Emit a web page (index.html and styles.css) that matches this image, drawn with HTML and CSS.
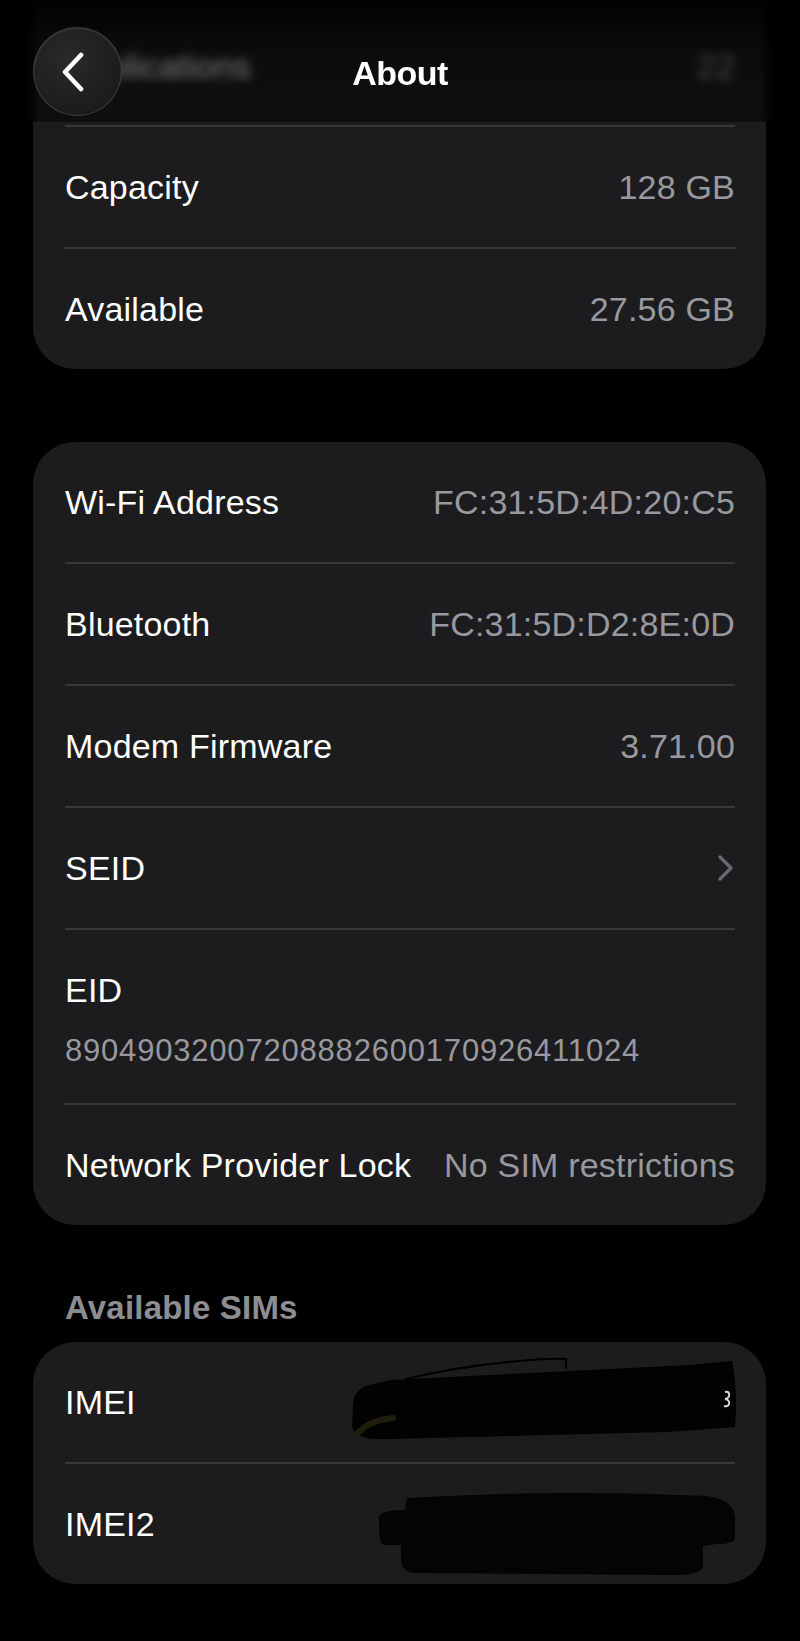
FILE: index.html
```html
<!DOCTYPE html>
<html lang="en">
<head>
    <meta charset="UTF-8" />
    <meta name="viewport" content="width=device-width, initial-scale=1.0" />
    <title>About</title>
    <link rel="stylesheet" href="styles.css">
</head>
<body>
    <div class="nav-bar">
        <button class="back-btn" aria-label="Back">
            <svg width="24" height="40" viewBox="0 0 24 40">
                <polyline points="20,3 4,20 20,37" fill="none" stroke="#fff" stroke-width="4.6" stroke-linecap="round" stroke-linejoin="round"/>
            </svg>
        </button>
        <h1 class="nav-title">About</h1>
    </div>

    <main class="page">
        <section class="group first">
            <div class="row">
                <span class="label">Applications</span>
                <span class="value">22</span>
            </div>
            <div class="row">
                <span class="label">Capacity</span>
                <span class="value">128 GB</span>
            </div>
            <div class="row">
                <span class="label">Available</span>
                <span class="value">27.56 GB</span>
            </div>
        </section>

        <section class="group">
            <div class="row">
                <span class="label">Wi-Fi Address</span>
                <span class="value">FC:31:5D:4D:20:C5</span>
            </div>
            <div class="row">
                <span class="label">Bluetooth</span>
                <span class="value">FC:31:5D:D2:8E:0D</span>
            </div>
            <div class="row">
                <span class="label">Modem Firmware</span>
                <span class="value">3.71.00</span>
            </div>
            <div class="row">
                <span class="label">SEID</span>
                <svg class="chevron" width="17" height="26" viewBox="0 0 17 26">
                    <polyline points="3,2 14,13 3,24" fill="none" stroke="#67676c" stroke-width="3.4" stroke-linecap="round" stroke-linejoin="round"/>
                </svg>
            </div>
            <div class="row stacked">
                <span class="label">EID</span>
                <span class="value eid">89049032007208882600170926411024</span>
            </div>
            <div class="row">
                <span class="label">Network Provider Lock</span>
                <span class="value">No SIM restrictions</span>
            </div>
        </section>

        <h2 class="group-title">Available SIMs</h2>
        <section class="group">
            <div class="row">
                <span class="label">IMEI</span>
                <svg class="redact one" width="390" height="96" viewBox="0 0 390 96">
                    <path d="M4 62 Q2 40 20 35 L42 30 Q200 22 340 15 L383 11 Q389 40 386 77 L318 82 L40 89 Q5 91 3 76 Z" fill="#020202"/>
                    <path d="M8 84 Q20 70 44 68" fill="none" stroke="#1f1d0c" stroke-width="6" stroke-linecap="round"/>
                    <path d="M57 29 Q110 16 170 11 Q200 8 217 9 L217 18" fill="none" stroke="#000" stroke-width="2.2" stroke-linecap="round"/>
                    <path d="M376 42 Q381 41 380 46 Q379 49 376 49 Q381 50 380 54 Q379 57 375 56" fill="none" stroke="#d8d8d8" stroke-width="2"/>
                </svg>
            </div>
            <div class="row">
                <span class="label">IMEI2</span>
                <svg class="redact two" width="362" height="90" viewBox="0 0 362 90">
                    <path d="M30 10 Q180 1 330 8 Q357 12 358 30 L358 50 Q357 56 340 56 L326 58 L326 80 Q320 87 300 87 L40 85 Q24 85 24 71 L24 57 L7 57 Q2 55 2 41 L2 29 Q4 22 28 22 Z" fill="#040404"/>
                </svg>
            </div>
        </section>
    </main>
</body>
</html>
```

FILE: styles.css
```css
:root {
    --bg: #000;
    --card: #1c1c1e;
    --sep: #38383b;
    --text: #fff;
    --muted: #98989e;
    --heading: #8d8d92;
}
body {
    margin: 0;
    background: var(--bg);
    color: var(--text);
    font-family: 'Liberation Sans', Arial, sans-serif;
}
.page {
    padding: 0 34px 58px 33px;
}
.nav-bar {
    position: fixed;
    top: 0;
    left: 0;
    right: 0;
    height: 122px;
    box-sizing: border-box;
    padding: 27px 0 0 33px;
    display: flex;
    align-items: flex-start;
    background: linear-gradient(to bottom, rgba(0, 0, 0, 0.9), rgba(0, 0, 0, 0.55) 45%, rgba(0, 0, 0, 0.45));
    backdrop-filter: blur(5px);
    -webkit-backdrop-filter: blur(5px);
    z-index: 10;
}
.back-btn {
    width: 89px;
    height: 89px;
    border-radius: 50%;
    border: 1.5px solid rgba(255, 255, 255, 0.14);
    background: radial-gradient(circle at 40% 35%, #2a2a2b, #1b1b1c 75%);
    box-shadow: inset 0 1px 2px rgba(255, 255, 255, 0.08);
    display: flex;
    align-items: center;
    justify-content: center;
    padding: 0 10px 0 0;
    cursor: pointer;
}
.nav-title {
    position: absolute;
    top: 53px;
    left: 0;
    right: 0;
    margin: 0;
    text-align: center;
    font-size: 34px;
    line-height: 40px;
    font-weight: bold;
    letter-spacing: -0.5px;
}
.group {
    background: var(--card);
    border-radius: 42px;
    padding: 0 31px 0 32px;
    margin-bottom: 73px;
}
.group.first {
    border-radius: 0 0 42px 42px;
}
.group.first .row:first-child {
    min-height: 125px;
    padding-top: 6px;
    box-sizing: border-box;
}
.group-title {
    margin: -10px 0 14px 32px;
    font-size: 33px;
    line-height: 40px;
    font-weight: bold;
    color: var(--heading);
    letter-spacing: 0.2px;
}
.row {
    min-height: 120px;
    display: flex;
    align-items: center;
    justify-content: space-between;
    font-size: 34px;
    line-height: 40px;
    letter-spacing: 0.2px;
}
.row + .row {
    border-top: 2px solid var(--sep);
}
.value {
    color: var(--muted);
}
.chevron {
    margin-right: 1px;
}
.row.stacked {
    flex-direction: column;
    align-items: flex-start;
    justify-content: flex-start;
    min-height: 0;
    padding: 40px 0 34px;
    gap: 23px;
}
.eid {
    font-size: 31px;
    line-height: 36px;
    letter-spacing: 0.8px;
}
.redact {
    flex-shrink: 0;
    margin-right: -4px;
}
.redact.one {
    margin-top: -8px;
}
.redact.two {
    margin-top: 18px;
}
```
